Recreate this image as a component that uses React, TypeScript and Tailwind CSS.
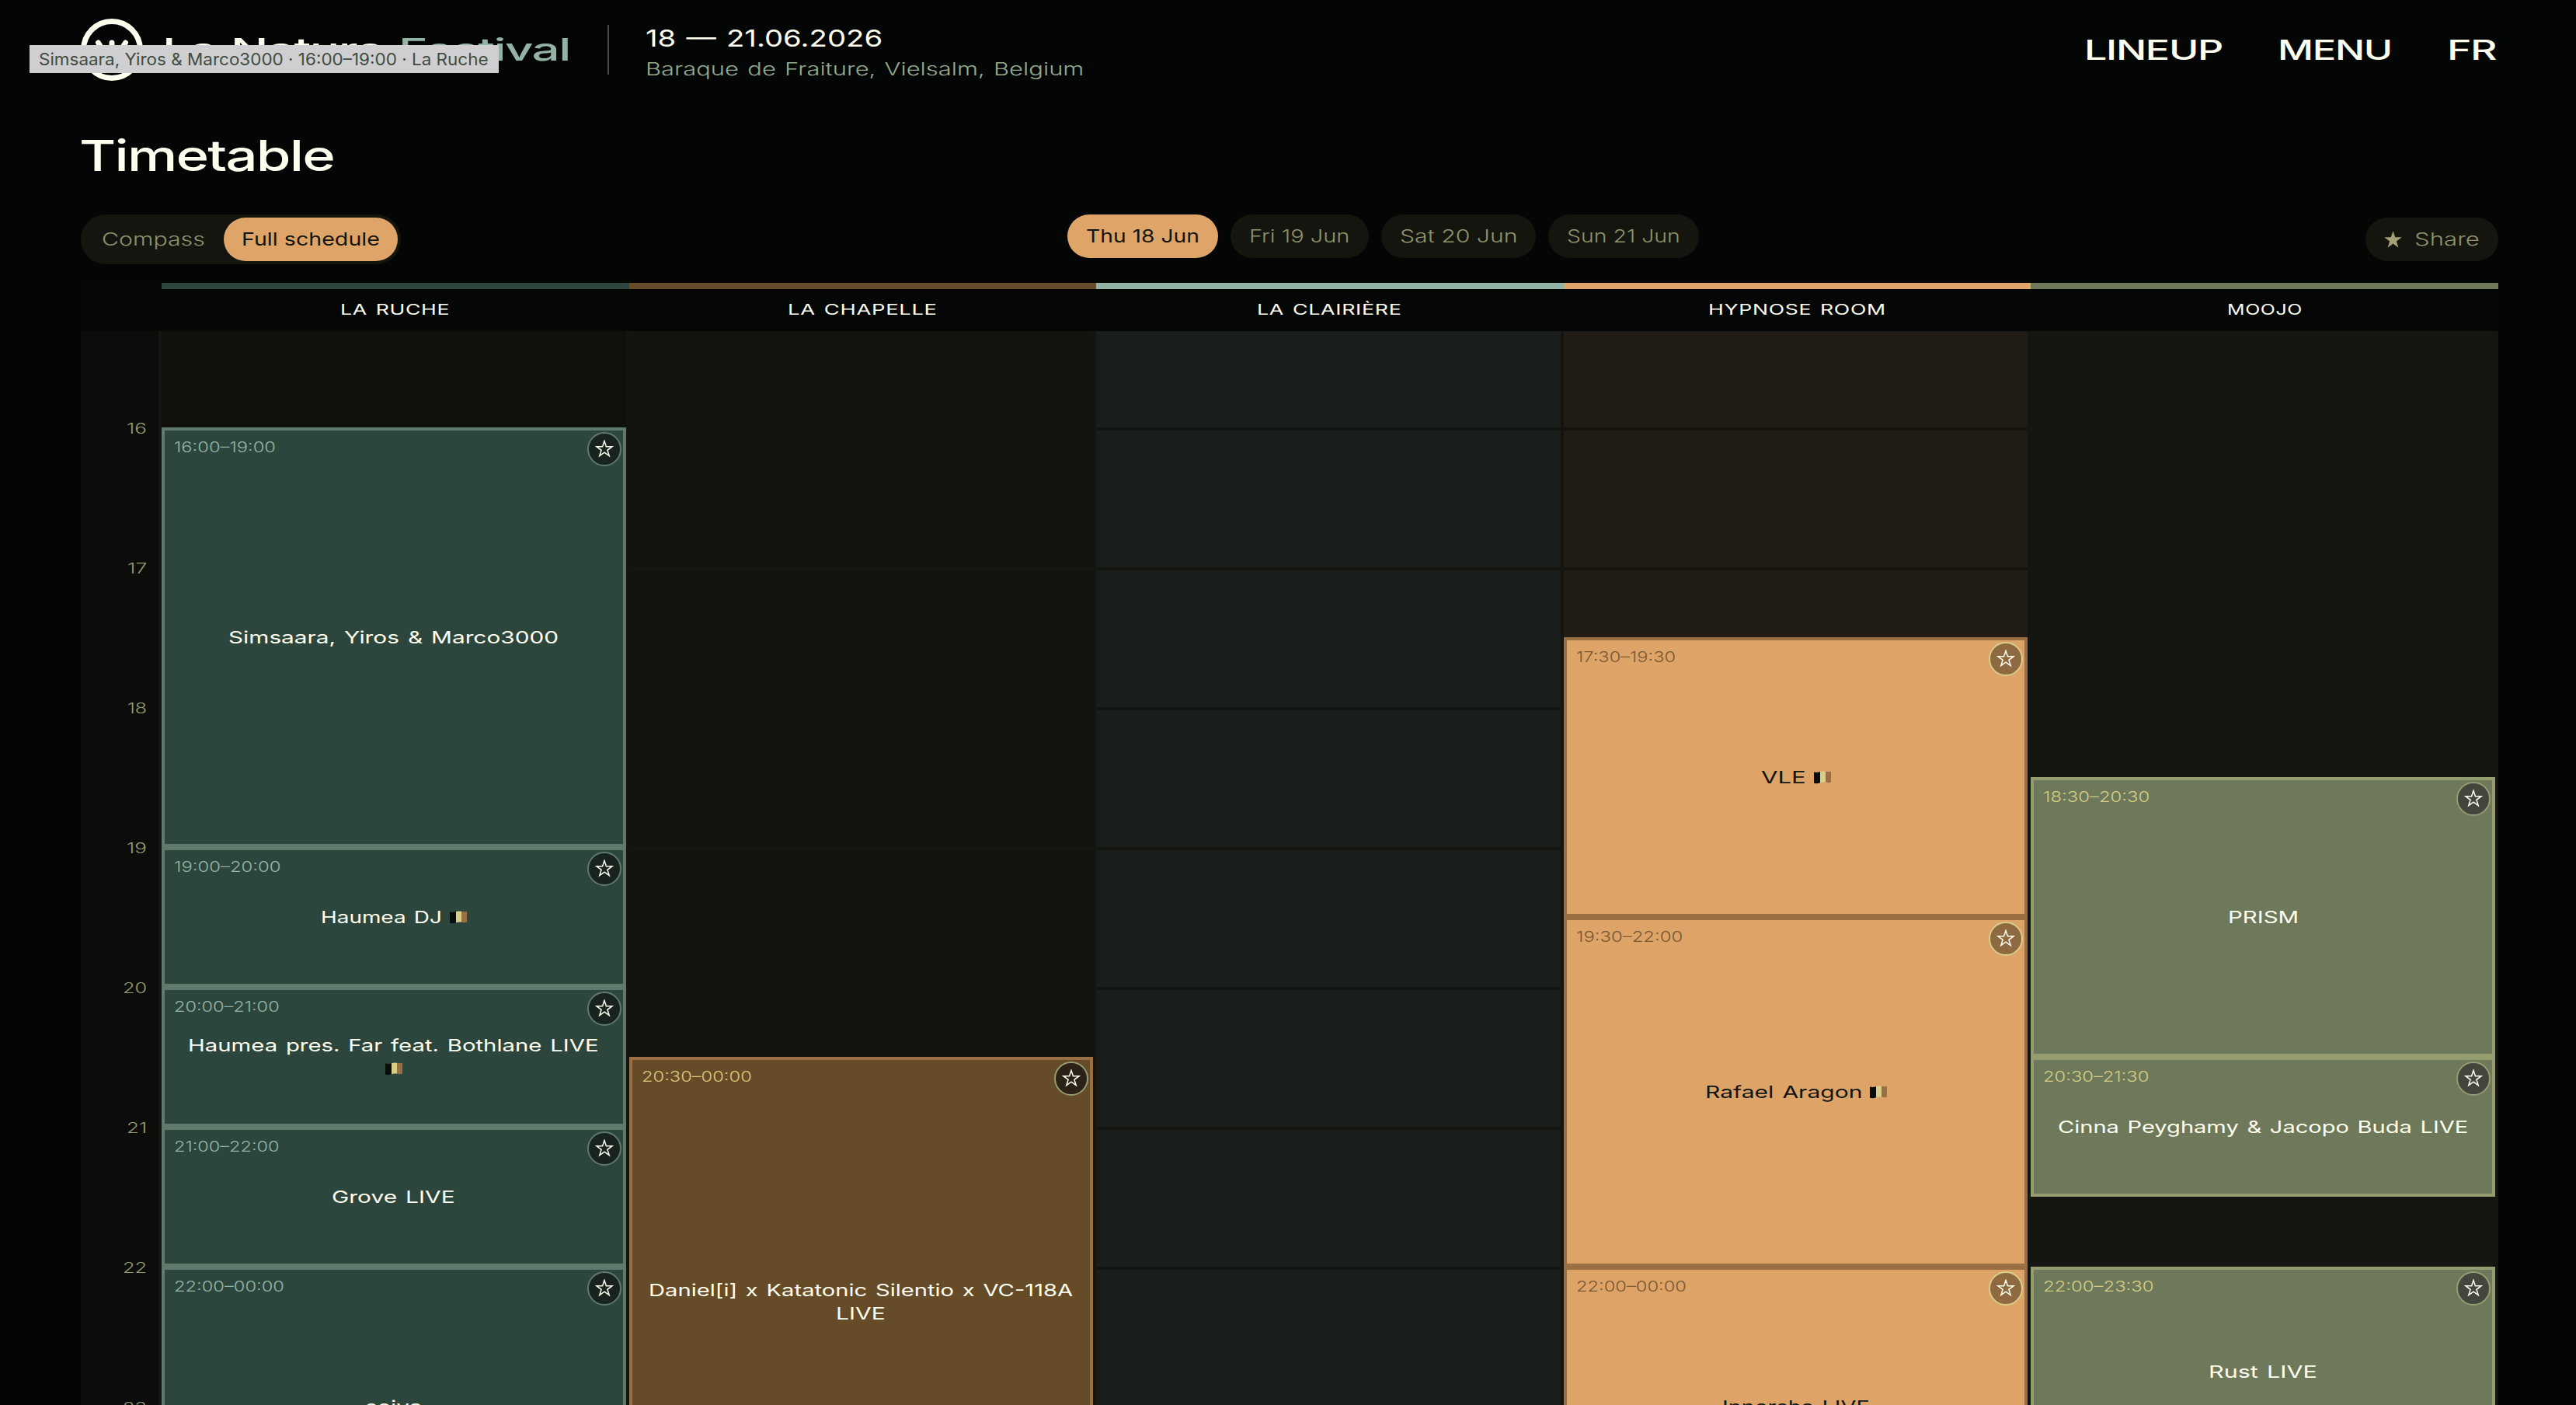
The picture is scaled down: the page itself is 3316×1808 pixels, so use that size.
import { ReactNode, useLayoutEffect, useRef, useState } from "react";
import clsx from "clsx";

const HOUR = 180;
const HOURS = [16, 17, 18, 19, 20, 21, 22, 23];
// the grid is scrolled, 16:00 sits 124px below the stage names
const FIRST_OFFSET = 124;

type Slot = {
  from: number;
  to: number;
  time: string;
  timeWidth: number;
  name: [string, number][];
  flag?: "inline" | "below";
};

type Stage = {
  name: string;
  nameWidth: number;
  bar: string;
  column: string;
  line: string;
  card: string;
  time: string;
  star: string;
  slots: Slot[];
};

const stages: Stage[] = [
  {
    name: "LA RUCHE",
    nameWidth: 141,
    bar: "border-[#2d463d]",
    column: "bg-[#10110c]",
    line: "bg-[#151610]",
    card: "bg-[#2d463d] border-[#5f7a6d] text-[#fffff0]",
    time: "text-[#93b4a5]",
    star: "bg-[#18231f] border-[#5f7a6d]",
    slots: [
      { from: 16, to: 19, time: "16:00–19:00", timeWidth: 131, name: [["Simsaara, Yiros & Marco3000", 425]] },
      { from: 19, to: 20, time: "19:00–20:00", timeWidth: 137, name: [["Haumea DJ", 156]], flag: "inline" },
      { from: 20, to: 21, time: "20:00–21:00", timeWidth: 136, name: [["Haumea pres. Far feat. Bothlane LIVE", 529]], flag: "below" },
      { from: 21, to: 22, time: "21:00–22:00", timeWidth: 136, name: [["Grove LIVE", 159]] },
      { from: 22, to: 24, time: "22:00–00:00", timeWidth: 142, name: [["seiva", 73]] },
    ],
  },
  {
    name: "LA CHAPELLE",
    nameWidth: 192,
    bar: "border-[#674c29]",
    column: "bg-[#12130e]",
    line: "bg-[#141510]",
    card: "bg-[#664b29] border-[#996f43] text-[#fffff0]",
    time: "text-[#d9c47a]",
    star: "bg-[#2b2117] border-[#949c70]",
    slots: [
      {
        from: 20.5,
        to: 24,
        time: "20:30–00:00",
        timeWidth: 142,
        name: [
          ["Daniel[i] x Katatonic Silentio x VC-118A", 546],
          ["LIVE", 64],
        ],
      },
    ],
  },
  {
    name: "LA CLAIRIÈRE",
    nameWidth: 187,
    bar: "border-[#93b4a5]",
    column: "bg-[#191e1d]",
    line: "bg-[#131510]",
    card: "",
    time: "",
    star: "",
    slots: [],
  },
  {
    name: "HYPNOSE ROOM",
    nameWidth: 229,
    bar: "border-[#dfa467]",
    column: "bg-[#221c17]",
    line: "bg-[#15140f]",
    card: "bg-[#dea467] border-[#996f43] text-[#111511]",
    time: "text-[#7a5833]",
    star: "bg-[#8f693f] border-[#d8ce86]",
    slots: [
      { from: 17.5, to: 19.5, time: "17:30–19:30", timeWidth: 128, name: [["VLE", 58]], flag: "inline" },
      { from: 19.5, to: 22, time: "19:30–22:00", timeWidth: 137, name: [["Rafael Aragon", 202]], flag: "inline" },
      { from: 22, to: 24, time: "22:00–00:00", timeWidth: 142, name: [["Innersha LIVE", 190]] },
    ],
  },
  {
    name: "MOOJO",
    nameWidth: 97,
    bar: "border-[#6e795b]",
    column: "bg-[#131611]",
    line: "bg-[#141611]",
    card: "bg-[#6e795b] border-[#949c70] text-[#fffff0]",
    time: "text-[#d3cc82]",
    star: "bg-[#43463c] border-[#949c70]",
    slots: [
      { from: 18.5, to: 20.5, time: "18:30–20:30", timeWidth: 137, name: [["PRISM", 91]] },
      { from: 20.5, to: 21.5, time: "20:30–21:30", timeWidth: 136, name: [["Cinna Peyghamy & Jacopo Buda LIVE", 528]] },
      { from: 22, to: 23.5, time: "22:00–23:30", timeWidth: 142, name: [["Rust LIVE", 140]] },
    ],
  },
];

const days = [
  { label: "Thu 18 Jun", width: 146, active: true },
  { label: "Fri 19 Jun", width: 130, active: false },
  { label: "Sat 20 Jun", width: 151, active: false },
  { label: "Sun 21 Jun", width: 146, active: false },
];

// extended lettering: stretches the text horizontally to the given width
function Wide({ width, children, className }: { width: number; children: ReactNode; className?: string }) {
  const ref = useRef<HTMLSpanElement>(null);
  const [scale, setScale] = useState(1);

  useLayoutEffect(() => {
    if (ref.current) setScale(width / ref.current.offsetWidth);
  }, [width]);

  return (
    <span className={clsx("block shrink-0 text-left", className)} style={{ width }}>
      <span
        ref={ref}
        className="inline-block origin-left whitespace-nowrap align-top"
        style={{ transform: `scaleX(${scale})` }}
      >
        {children}
      </span>
    </span>
  );
}

const STAR = "M0-10.6 2.4-3.3H10.1L3.9 1.3 6.2 8.6 0 4.1-6.2 8.6-3.9 1.3-10.1-3.3H-2.4Z";

function Flag() {
  return (
    <svg viewBox="0 0 22 17" className="h-[17px] w-[22px] shrink-0">
      <path d="M0 1.6Q4 2.6 8 1.2V15.2Q4 17 0 15.8Z" fill="#0b0d0a" />
      <path d="M8 1.2Q11 0 15 .8V14.6Q11 14 8 15.2Z" fill="#d8ce86" />
      <path d="M15 .8Q19 1.6 22 .8V14.6Q19 15.8 15 14.6Z" fill="#996f43" />
    </svg>
  );
}

function Logo() {
  return (
    <svg viewBox="0 0 80 80" className="size-20 shrink-0" fill="none" stroke="#fffff0">
      <circle cx="40" cy="40" r="36.5" strokeWidth="7" />
      <path
        d="M22.5 31Q27 37 30 50M40 31V52M57.5 31Q53 37 50 50"
        strokeWidth="7"
        strokeLinecap="round"
      />
    </svg>
  );
}

function Header() {
  return (
    <header className="flex h-32 items-center text-[#fffff0]">
      <Logo />
      <div className="ml-[25px] flex gap-[19px] text-[40px] font-medium tracking-tight">
        <Wide width={285}>La Nature</Wide>
        <Wide width={220} className="text-[#93b4a5]">
          Festival
        </Wide>
      </div>
      <div className="ml-[49px] h-16 w-0.5 bg-[#4a4c40]" />
      <div className="ml-[47px] pt-[9px] leading-10">
        <Wide width={305} className="text-[30px]">
          18 — 21.06.2026
        </Wide>
        <Wide width={565} className="text-[23px] font-light text-[#93ab8c]">
          Baraque de Fraiture, Vielsalm, Belgium
        </Wide>
      </div>
      <nav className="ml-auto flex gap-[71px] pr-0.5 text-[35px] font-medium tracking-tight">
        <Wide width={178}>LINEUP</Wide>
        <Wide width={147}>MENU</Wide>
        <Wide width={64}>FR</Wide>
      </nav>
    </header>
  );
}

function Controls() {
  return (
    <div className="flex h-[92px] items-start justify-between pt-1 text-[23px] font-light text-[#8f926a]">
      <div className="flex h-16 rounded-full bg-[#14150f] p-1">
        <button className="flex h-14 w-[180px] items-center justify-center pr-0.5">
          <Wide width={133}>Compass</Wide>
        </button>
        <button className="flex h-14 w-56 items-center justify-center rounded-full bg-[#dfa467] font-normal text-[#14150f]">
          <Wide width={178}>Full schedule</Wide>
        </button>
      </div>
      <div className="flex gap-4">
        {days.map((day) => (
          <button
            key={day.label}
            className={clsx(
              "flex h-14 items-center rounded-full px-6",
              day.active ? "bg-[#dfa467] font-normal text-[#14150f]" : "bg-[#14150f]",
            )}
          >
            <Wide width={day.width}>{day.label}</Wide>
          </button>
        ))}
      </div>
      <button className="mt-1 flex h-14 w-[171px] items-center gap-4 rounded-full bg-[#14150f] pl-6">
        <svg viewBox="-11.5 -12 23 23" className="size-[23px]" fill="#a6a276">
          <path d={STAR} transform="scale(1.12)" />
        </svg>
        <Wide width={84}>Share</Wide>
      </button>
    </div>
  );
}

function SlotCard({ slot, stage, previousEnd }: { slot: Slot; stage: Stage; previousEnd: number }) {
  return (
    <article
      className={clsx("relative flex flex-col items-center justify-center border-4 text-[22px] leading-[30px]", stage.card)}
      style={{ height: (slot.to - slot.from) * HOUR, marginTop: (slot.from - previousEnd) * HOUR }}
    >
      <Wide
        width={slot.timeWidth}
        className={clsx("absolute top-2.5 left-3 text-[19px] leading-6 font-light", stage.time)}
      >
        {slot.time}
      </Wide>
      {slot.name.map(([line, width]) => (
        <div key={line} className="flex items-center gap-[10px]">
          <Wide width={width}>{line}</Wide>
          {slot.flag === "inline" && <Flag />}
        </div>
      ))}
      {slot.flag === "below" && (
        <div className="flex h-[30px] items-center">
          <Flag />
        </div>
      )}
      <button
        className={clsx("absolute top-0.5 right-0.5 flex size-11 items-center justify-center rounded-full border-2", stage.star)}
      >
        <svg viewBox="-12 -12 24 24" className="size-6" fill="none" stroke="#fffff0" strokeWidth="1.5">
          <path d={STAR} />
        </svg>
      </button>
    </article>
  );
}

function StageColumn({ stage }: { stage: Stage }) {
  return (
    <div className={clsx("relative border-r-4 border-[#141510]", stage.column)} style={{ paddingTop: FIRST_OFFSET }}>
      <div className="absolute inset-x-0 top-[124px]">
        {HOURS.map((hour) => (
          <div key={hour} className="h-[180px]">
            <div className={clsx("h-1", stage.line)} />
          </div>
        ))}
      </div>
      {stage.slots.map((slot, i) => (
        <SlotCard key={slot.time} slot={slot} stage={stage} previousEnd={i ? stage.slots[i - 1].to : HOURS[0]} />
      ))}
    </div>
  );
}

export default function App() {
  return (
    <div className="relative h-[1808px] w-[3316px] overflow-hidden bg-[#040606] pr-[100px] pl-[104px] font-['Inter',sans-serif] [word-spacing:0.12em]">
      <Header />
      <h1 className="-ml-0.5 flex h-36 items-center text-[55px] font-medium tracking-tight text-[#fffff0]">
        <Wide width={328}>Timetable</Wide>
      </h1>
      <Controls />

      <div className="grid grid-cols-[104px_repeat(5,1fr)] bg-[#050606]">
        <div />
        {stages.map((stage) => (
          <div
            key={stage.name}
            className={clsx(
              "flex h-[62px] items-center justify-center border-t-8 text-[18.5px] tracking-wide text-[#fffff0]",
              stage.bar,
            )}
          >
            <Wide width={stage.nameWidth}>{stage.name}</Wide>
          </div>
        ))}
      </div>

      <div className="grid h-[1382px] grid-cols-[104px_repeat(5,1fr)] overflow-hidden">
        <div className="border-r-4 border-[#141510] bg-[#0c0c0a] pt-[35px]">
          {HOURS.map((hour) => (
            <div key={hour} className="flex h-[180px] items-center justify-end pr-[15px] text-[18px] font-light text-[#949c70]">
              <Wide width={hour === 16 || hour === 19 || hour === 21 ? 26 : hour < 20 ? 25 : 31}>{hour}</Wide>
            </div>
          ))}
        </div>
        {stages.map((stage) => (
          <StageColumn key={stage.name} stage={stage} />
        ))}
      </div>

      {/* hover title of the first slot */}
      <div className="absolute top-[58px] left-[38px] flex h-9 w-[604px] items-center bg-[#cfcfd1] pl-3 text-[22px] text-[#414c41] [word-spacing:0]">
        <Wide width={579}>Simsaara, Yiros & Marco3000 · 16:00–19:00 · La Ruche</Wide>
      </div>
    </div>
  );
}
